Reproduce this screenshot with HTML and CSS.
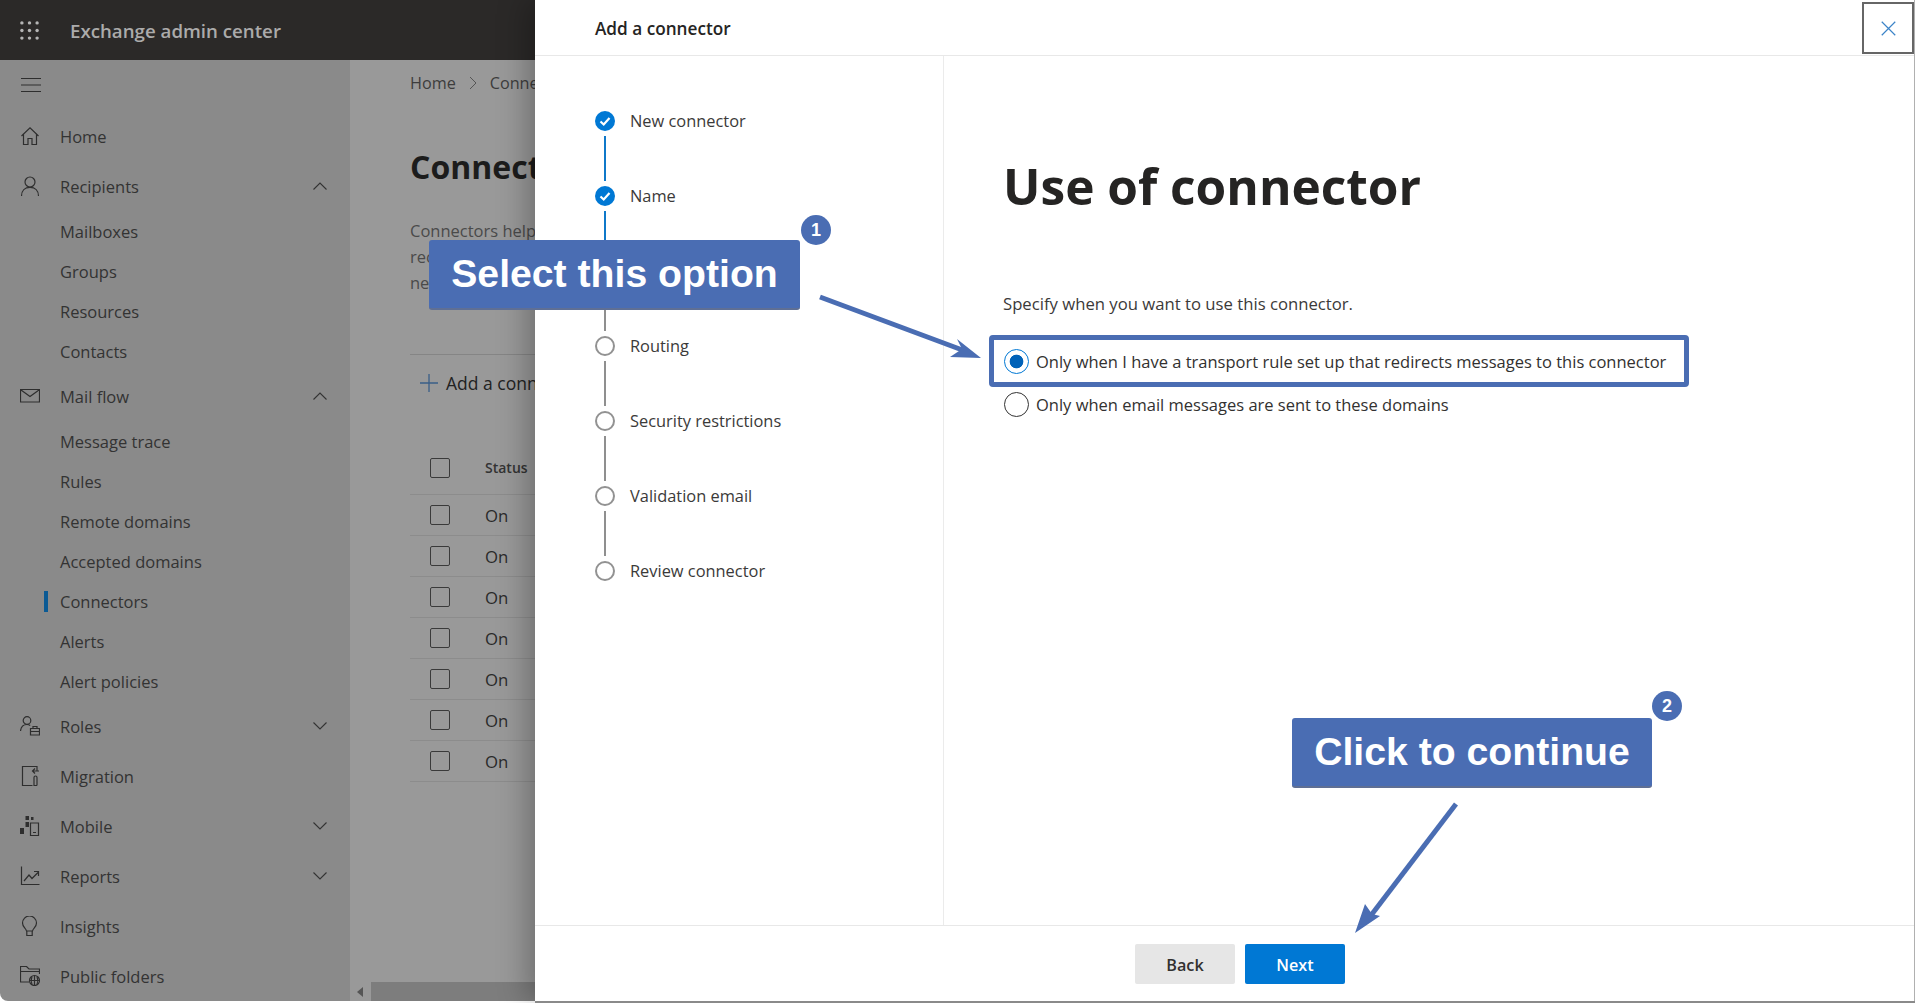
FILE: index.html
```html
<!DOCTYPE html>
<html lang="en">
<head>
<meta charset="utf-8">
<title>Exchange admin center</title>
<link rel="stylesheet" href="styles.css">
</head>
<body>
<div class="shell">
  <header class="topbar">
    <svg class="waffle" viewBox="0 0 20 20"><g fill="#b5b5b5"><circle cx="2" cy="2" r="1.8"/><circle cx="10" cy="2" r="1.8"/><circle cx="18" cy="2" r="1.8"/><circle cx="2" cy="10" r="1.8"/><circle cx="10" cy="10" r="1.8"/><circle cx="18" cy="10" r="1.8"/><circle cx="2" cy="18" r="1.8"/><circle cx="10" cy="18" r="1.8"/><circle cx="18" cy="18" r="1.8"/></g></svg>
    <span class="product">Exchange admin center</span>
  </header>
  <div class="workspace">
    <nav class="sidebar">
      <div class="hamburger"><svg class="icon" viewBox="0 0 20 20"><path d="M0 3.5H20M0 10H20M0 16.5H20"/></svg></div>
      <a class="nav-top"><svg class="icon" viewBox="0 0 20 20"><path d="M1.5 10 10 1.8 18.5 10M3.5 8.3V18.5H8V12.5H12V18.5H16.5V8.3"/></svg>Home</a>
      <a class="nav-top"><svg class="icon" viewBox="0 0 20 20"><circle cx="10" cy="6" r="5"/><path d="M1.5 20C1.5 14.5 5 11.3 10 11.3S18.5 14.5 18.5 20"/></svg>Recipients<svg class="chevron" viewBox="0 0 14 8"><path d="M.5 7.5 7 1l6.500 6.500"/></svg></a>
      <a class="nav-sub">Mailboxes</a>
      <a class="nav-sub">Groups</a>
      <a class="nav-sub">Resources</a>
      <a class="nav-sub">Contacts</a>
      <a class="nav-top"><svg class="icon" viewBox="0 0 20 20"><path d="M.5 3.500H19.500V16H.5ZM1 4 10 10.500 19 4"/></svg>Mail flow<svg class="chevron" viewBox="0 0 14 8"><path d="M.5 7.5 7 1l6.500 6.500"/></svg></a>
      <a class="nav-sub">Message trace</a>
      <a class="nav-sub">Rules</a>
      <a class="nav-sub">Remote domains</a>
      <a class="nav-sub">Accepted domains</a>
      <a class="nav-sub is-active"><span class="marker"></span>Connectors</a>
      <a class="nav-sub">Alerts</a>
      <a class="nav-sub">Alert policies</a>
      <a class="nav-top"><svg class="icon" viewBox="0 0 20 20"><circle cx="7" cy="4.500" r="3.800"/><path d="M.5 15C1 11 3.500 8.500 7 8.500c1.300 0 2.300.3 3.200.9M10.500 12.500H19.500V19H10.500ZM13 12.500V10.500H17V12.500M10.500 15.500H19.500"/></svg>Roles<svg class="chevron" viewBox="0 0 14 8"><path d="M.5.5 7 7l6.500-6.500"/></svg></a>
      <a class="nav-top"><svg class="icon" viewBox="0 0 20 20"><path d="M12.500 19.500H2.500V.5H17V5M19 5H12.500M15 2.500 12.500 5 15 7.500M17 19.500V11.500A1.500 1.500 0 0 0 14 11.500V19.500H17"/></svg>Migration</a>
      <a class="nav-top"><svg class="icon" viewBox="0 0 20 20"><path class="solid" d="M0 12H4V18H0ZM5.500 6H9V11H5.500ZM5.500 0H9V4H5.500ZM11 1H13.500V4H11Z"/><path d="M10.500 7H18.500V19.500H10.500ZM13 16.500H16"/></svg>Mobile<svg class="chevron" viewBox="0 0 14 8"><path d="M.5.5 7 7l6.500-6.500"/></svg></a>
      <a class="nav-top"><svg class="icon" viewBox="0 0 20 20"><path d="M1.500.5V18.500H19.500M4 15 9 9 12 12.500 18 6.500M14 5.500H18.500V10"/></svg>Reports<svg class="chevron" viewBox="0 0 14 8"><path d="M.5.5 7 7l6.500-6.500"/></svg></a>
      <a class="nav-top"><svg class="icon" viewBox="0 0 20 20"><path d="M6.500 15C6 12 2.500 11 2.500 7A7 7 0 0 1 16.500 7C16.500 11 13 12 12.500 15ZM6.800 15V19.500H12.200V15"/></svg>Insights</a>
      <a class="nav-top"><svg class="icon" viewBox="0 0 20 20"><path d="M9 16H.5V.5H6.500L9 3H19.500V8M.5 5.500H19.500"/><circle cx="14.500" cy="14.500" r="5"/><path d="M9.500 14.500H19.500M14.500 9.500V19.500M12 10.500C11 13 11 16 12 18.500M17 10.500C18 13 18 16 17 18.500"/></svg>Public folders</a>
    </nav>
    <main class="main">
      <div class="breadcrumb"><span>Home</span><svg class="crumb-sep" viewBox="0 0 8 14"><path d="M1 1l6 6-6 6"/></svg><span>Connectors</span></div>
      <h1 class="page-title">Connectors</h1>
      <p class="page-desc">Connectors help control the flow of email messages to and from your organization.<br>recipients and partners, however most organizations don't<br>need to use connectors, so check first.</p>
      <div class="toolbar"><svg class="plus" viewBox="0 0 18 18"><path d="M9 0V18M0 9H18"/></svg><span>Add a connector</span></div>
      <div class="table-head"><span class="checkbox"></span><span>Status</span></div>
      <div class="table-row"><span class="checkbox"></span><span>On</span></div>
      <div class="table-row"><span class="checkbox"></span><span>On</span></div>
      <div class="table-row"><span class="checkbox"></span><span>On</span></div>
      <div class="table-row"><span class="checkbox"></span><span>On</span></div>
      <div class="table-row"><span class="checkbox"></span><span>On</span></div>
      <div class="table-row"><span class="checkbox"></span><span>On</span></div>
      <div class="table-row"><span class="checkbox"></span><span>On</span></div>
      <div class="hscroll"><span class="hscroll-arrow"></span><span class="hscroll-thumb"></span></div>
    </main>
  </div>
</div>

<section class="panel">
  <header class="panel-head">
    <span class="panel-title">Add a connector</span>
    <button class="close"><svg viewBox="0 0 16 16"><path d="M.8.8 15.200 15.200M15.200.8.8 15.200"/></svg></button>
  </header>
  <div class="panel-body">
    <ol class="stepper">
      <li class="step done"><div class="track"><span class="dot"><svg viewBox="0 0 20 20"><path d="M5.500 10.500 8.700 13.500 14.500 7"/></svg></span><span class="line"></span></div>New connector</li>
      <li class="step done"><div class="track"><span class="dot"><svg viewBox="0 0 20 20"><path d="M5.500 10.500 8.700 13.500 14.500 7"/></svg></span><span class="line"></span></div>Name</li>
      <li class="step"><div class="track"><span class="dot"></span><span class="line"></span></div>Use of connector</li>
      <li class="step"><div class="track"><span class="dot"></span><span class="line"></span></div>Routing</li>
      <li class="step"><div class="track"><span class="dot"></span><span class="line"></span></div>Security restrictions</li>
      <li class="step"><div class="track"><span class="dot"></span><span class="line"></span></div>Validation email</li>
      <li class="step"><div class="track"><span class="dot"></span></div>Review connector</li>
    </ol>
    <div class="content">
      <h2 class="content-title">Use of connector</h2>
      <p class="content-lead">Specify when you want to use this connector.</p>
      <div class="option"><span class="radio checked"></span>Only when I have a transport rule set up that redirects messages to this connector</div>
      <div class="option"><span class="radio"></span>Only when email messages are sent to these domains</div>
    </div>
  </div>
  <footer class="panel-foot">
    <button class="btn btn-back">Back</button>
    <button class="btn btn-next">Next</button>
  </footer>
</section>

<div class="annotations">
  <div class="callout callout-one">Select this option</div>
  <div class="badge badge-one">1</div>
  <div class="highlight"></div>
  <div class="callout callout-two">Click to continue</div>
  <div class="badge badge-two">2</div>
  <svg class="arrows" viewBox="0 0 1915 1003">
    <path class="arrow-shaft" d="M820 297 965 351"/>
    <path class="arrow-head" d="M981 358 950 357 962 349 957 339Z"/>
    <path class="arrow-shaft" d="M1456 804 1369 918"/>
    <path class="arrow-head" d="M1355 933 1365 904 1372 914 1380 916Z"/>
  </svg>
</div>
</body>
</html>
```
FILE: styles.css
```css
* { box-sizing: border-box; }
html, body { margin: 0; height: 100%; overflow: hidden; background: #fff; }
body { font-family: "Open Sans", "Liberation Sans", sans-serif; color: #323130; font-size: 16.500px; }
svg { display: block; }

.shell { width: 535px; height: 1001px; display: flex; flex-direction: column; overflow: hidden; }
.topbar { height: 60px; background: #2b2928; display: flex; align-items: center; padding-left: 20px; flex: none; }
.waffle { width: 19px; height: 19px; margin-right: 31px; }
.product { color: #ababab; font-size: 18.700px; font-weight: 600; }

.workspace { flex: 1; display: flex; min-height: 0; border-bottom-left-radius: 8px; overflow: hidden; }
.sidebar { width: 350px; flex: none; background: #8a8a8a; color: #333; overflow: hidden; }
.hamburger { height: 51px; padding: 15px 0 0 21px; }
.icon { width: 20px; height: 20px; fill: none; stroke: #2e2e2e; stroke-width: 1.200; flex: none; }
.icon .solid { fill: #2e2e2e; stroke: none; }
.nav-top { height: 50px; display: flex; align-items: center; gap: 20px; padding: 0 23px 0 20px; }
.chevron { width: 14px; height: 8px; margin-left: auto; fill: none; stroke: #333; stroke-width: 1.100; }
.nav-sub { height: 40px; display: flex; align-items: center; padding-left: 60px; }
.marker { width: 4px; height: 21px; background: #0b5a94; margin-left: -16px; margin-right: 12px; }

.main { flex: 1; background: #999; padding-left: 60px; display: flex; flex-direction: column; min-width: 0; overflow: hidden; color: #2e2e2e; }
.breadcrumb { height: 46px; display: flex; align-items: center; gap: 13px; color: #3d3d3d; flex: none; font-size: 16.200px; white-space: nowrap; }
.breadcrumb > * { flex: none; }
.crumb-sep { width: 8px; height: 14px; fill: none; stroke: #555; }
.page-title { margin: 38px 0 0; font-size: 32px; line-height: 46px; font-weight: 700; color: #1c1c1c; flex: none; white-space: nowrap; }
.page-desc { margin: 28px 0 0; line-height: 26px; color: #4a4a4a; white-space: nowrap; flex: none; }
.toolbar { margin-top: 58px; border-top: 1px solid #858585; height: 56px; display: flex; align-items: center; gap: 8px; padding-left: 10px; font-size: 17.500px; color: #222; flex: none; white-space: nowrap; }
.plus { width: 18px; height: 18px; fill: none; stroke: #3a5f88; stroke-width: 1.300; flex: none; }
.table-head, .table-row { display: flex; align-items: center; gap: 35px; padding-left: 20px; border-bottom: 1px solid #8c8c8c; flex: none; }
.table-head { margin-top: 31px; height: 54px; font-size: 14px; font-weight: 600; color: #333; }
.table-row { height: 41px; font-weight: 500; font-size: 16.800px; color: #2a2a2a; }
.checkbox { width: 20px; height: 20px; border: 1px solid #3a3a3a; border-radius: 2px; flex: none; }
.hscroll { margin-top: auto; margin-left: -60px; height: 19px; display: flex; align-items: center; flex: none; }
.hscroll-arrow { width: 0; height: 0; border: 5px solid transparent; border-right: 6px solid #555; border-left: 0; margin: 0 8px 0 7px; }
.hscroll-thumb { flex: 1; height: 19px; background: #7d7d7d; }

.panel { position: absolute; left: 535px; right: 0; top: 0; height: 1001px; background: #fff; border-right: 1px solid #b0b0b0; display: flex; flex-direction: column; box-shadow: -8px 0 28px rgba(0, 0, 0, .28); }
.panel::after { content: ""; position: absolute; left: 0; right: -1px; top: 100%; height: 2px; background: #8a8a8a; }
.panel-head { height: 56px; border-bottom: 1px solid #e8e8e8; display: flex; align-items: flex-start; justify-content: space-between; padding-left: 60px; flex: none; }
.panel-title { font-size: 17.200px; font-weight: 600; line-height: 58px; color: #252423; }
.close { width: 52px; height: 52px; margin-top: 2px; background: #fff; border: 2px solid #666; padding: 0; display: flex; align-items: center; justify-content: center; }
.close svg { width: 15px; height: 15px; fill: none; stroke: #3c84c8; stroke-width: 1.300; }
.panel-body { flex: 1; display: flex; min-height: 0; }
.stepper { width: 409px; flex: none; margin: 0; padding: 55px 0 0 60px; list-style: none; border-right: 1px solid #ebebeb; }
.step { height: 75px; display: flex; gap: 15px; line-height: 20px; font-size: 16.400px; color: #3b3a39; }
.track { width: 20px; display: flex; flex-direction: column; align-items: center; gap: 5px; }
.dot { width: 20px; height: 20px; border-radius: 50%; border: 2.500px solid #929292; background: #fff; flex: none; }
.line { width: 2px; height: 45px; background: #8f8f8f; flex: none; }
.done .dot { border: 0; background: #0078d4; }
.done .dot svg { width: 20px; height: 20px; fill: none; stroke: #fff; stroke-width: 2.200; }
.done .line { background: #0f78c9; }
.content { flex: 1; padding: 96px 0 0 59px; }
.content-title { margin: 0; font-size: 49.600px; line-height: 68px; font-weight: 700; color: #252423; }
.content-lead { margin: 72px 0 24px; line-height: 24px; font-size: 16.700px; color: #3b3a39; }
.option { height: 43px; margin-left: 1px; display: flex; align-items: center; gap: 7px; color: #323130; }
.radio { width: 25px; height: 25px; border-radius: 50%; border: 1.500px solid #333; background: #fff; flex: none; }
.radio.checked { border-color: #0078d4; background: radial-gradient(circle, #0062b8 0 6.500px, #fff 7.200px); }
.panel-foot { height: 76px; flex: none; border-top: 1px solid #e8e8e8; display: flex; gap: 10px; padding: 18px 0 0 600px; }
.btn { width: 100px; height: 40px; border: 0; border-radius: 2px; padding: 2px 0 0; font: 600 16.200px "Open Sans", "Liberation Sans", sans-serif; }
.btn-back { background: #e6e6e6; color: #323130; }
.btn-next { background: #0078d4; color: #fff; }

.annotations { position: absolute; left: 0; top: 0; width: 1915px; height: 1003px; pointer-events: none; }
.callout { position: absolute; background: #4a6db3; color: #fff; border-radius: 3px; border-bottom: 2px solid #5f6f94; font: 700 39.200px/1 "Liberation Sans", Arial, sans-serif; display: flex; align-items: center; justify-content: center; white-space: nowrap; }
.callout-one { left: 429px; top: 240px; width: 371px; height: 70px; }
.callout-two { left: 1292px; top: 718px; width: 360px; height: 70px; }
.badge { position: absolute; width: 30px; height: 30px; border-radius: 50%; background: #4a6db3; color: #fff; font: 700 18px/30px "Liberation Sans", Arial, sans-serif; text-align: center; }
.badge-one { left: 801px; top: 215px; }
.badge-two { left: 1652px; top: 691px; }
.highlight { position: absolute; left: 989px; top: 335px; width: 700px; height: 52px; border: 5px solid #4a6db3; border-radius: 4px; }
.arrows { position: absolute; inset: 0; width: 100%; height: 100%; }
.arrow-shaft { stroke: #4a6db3; stroke-width: 5; fill: none; }
.arrow-head { fill: #4a6db3; }
```
